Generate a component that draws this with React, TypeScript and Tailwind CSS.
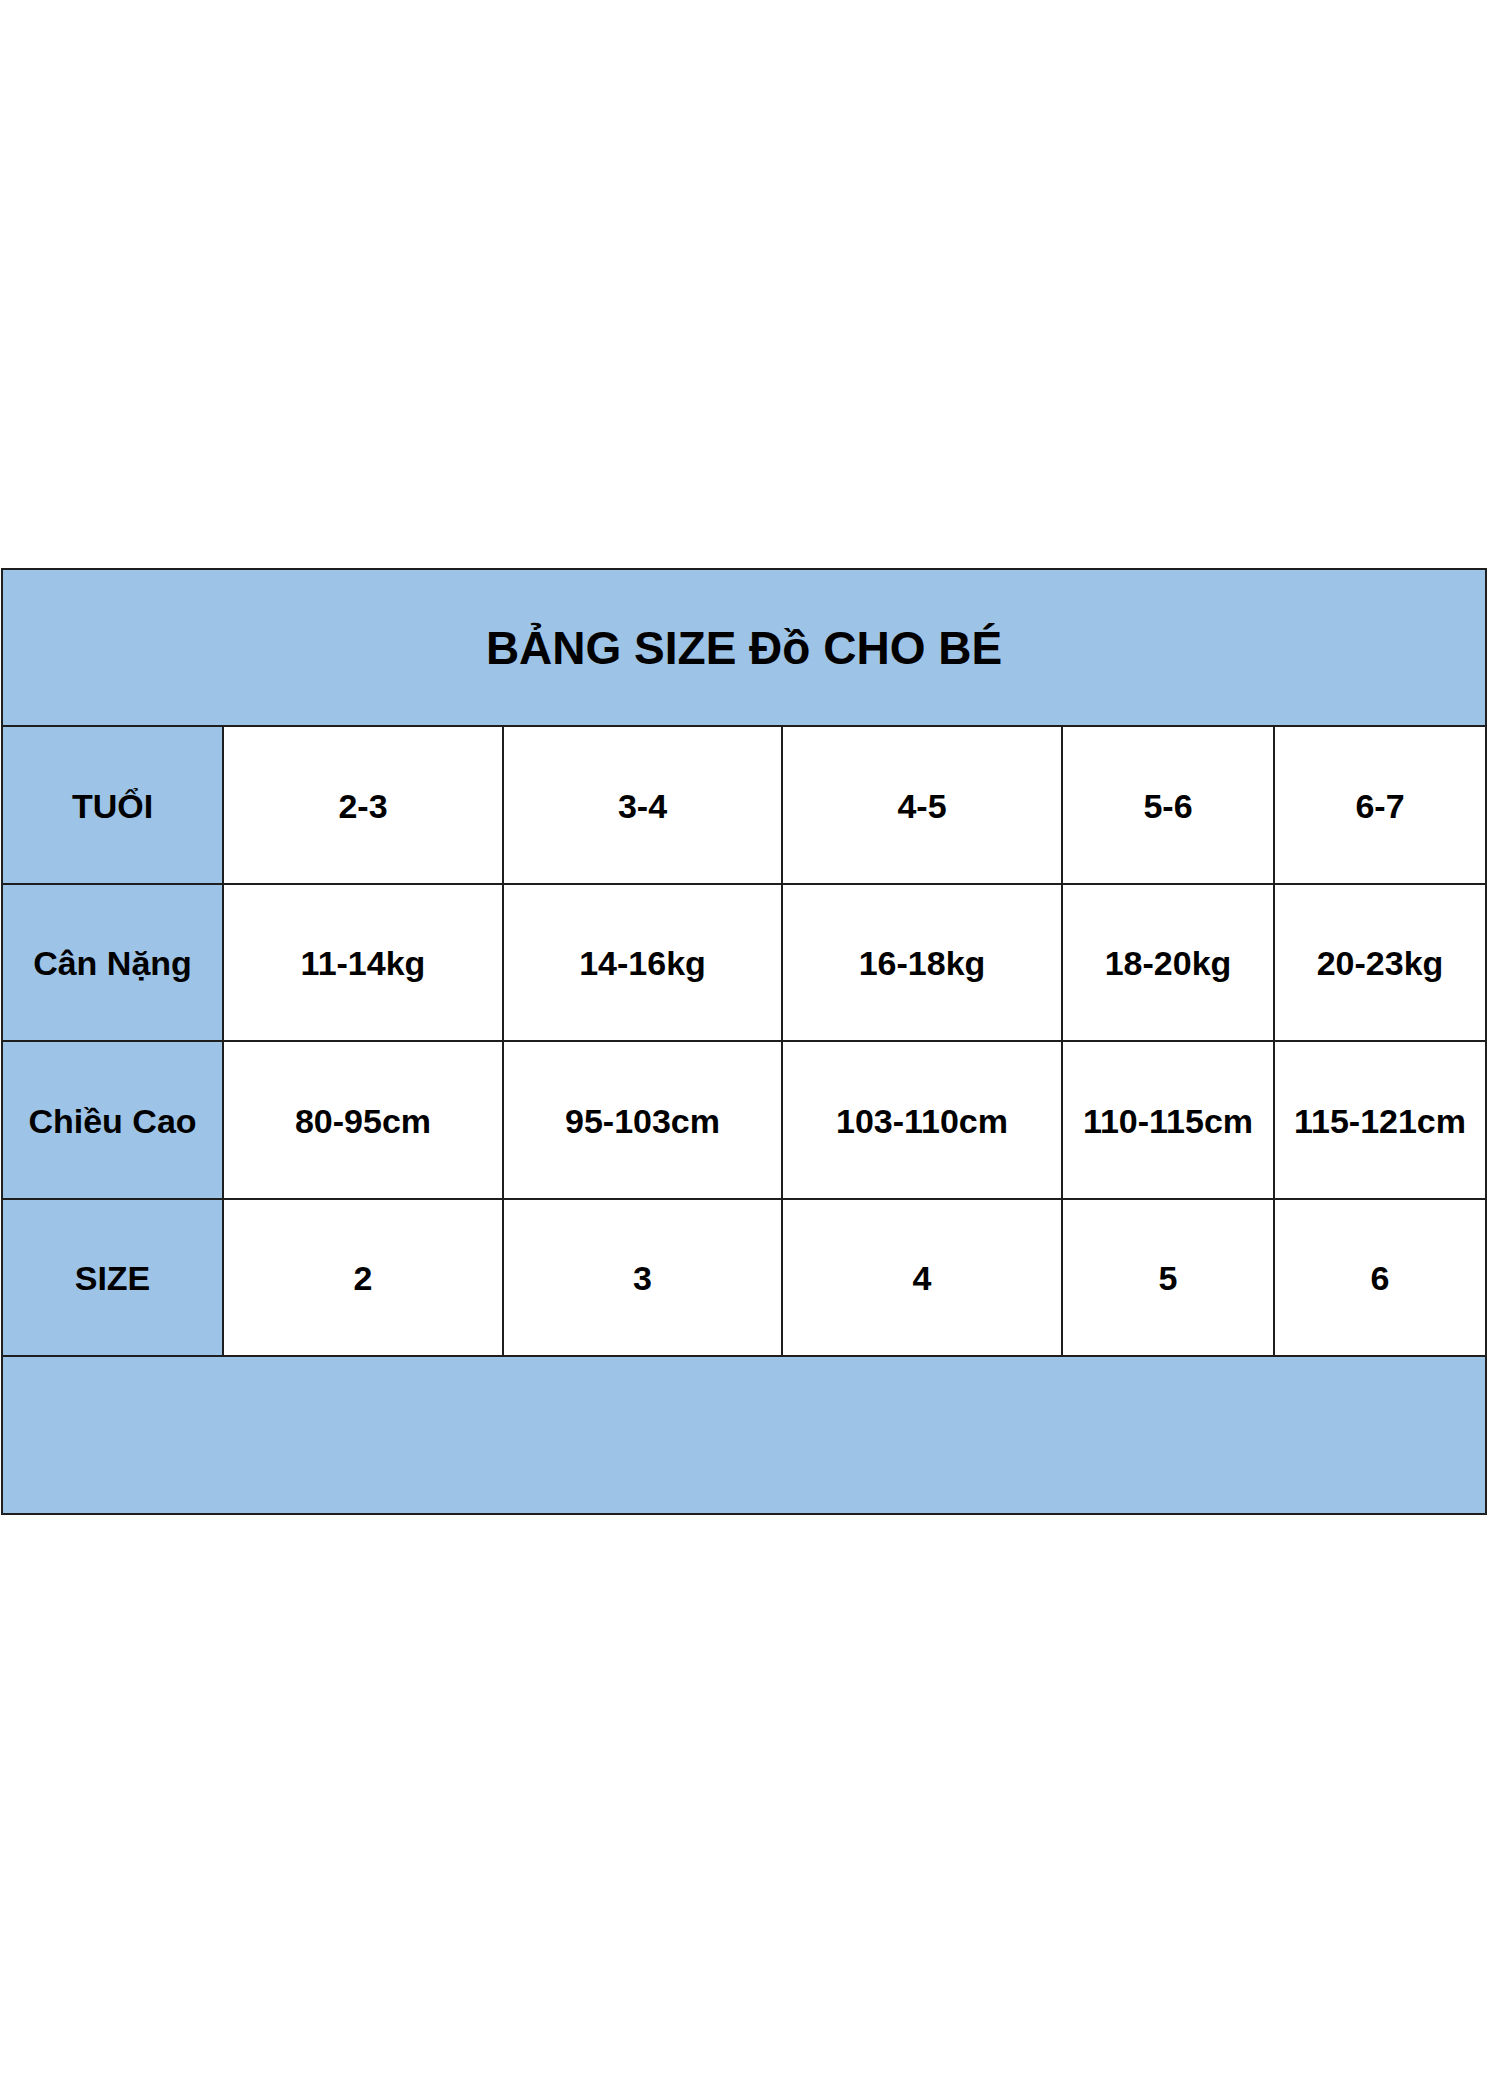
import React from "react";

const cols = ["w-[221px]", "w-[280px]", "w-[279px]", "w-[280px]", "w-[212px]", "w-[210px]"];

const rows: string[][] = [
  ["TUỔI", "2-3", "3-4", "4-5", "5-6", "6-7"],
  ["Cân Nặng", "11-14kg", "14-16kg", "16-18kg", "18-20kg", "20-23kg"],
  ["Chiều Cao", "80-95cm", "95-103cm", "103-110cm", "110-115cm", "115-121cm"],
  ["SIZE", "2", "3", "4", "5", "6"],
];

export default function App() {
  return (
    <div
      className="w-[1490px] h-[2086px] bg-white pt-[568px]"
      style={{ fontFamily: '"Liberation Sans", Arial, sans-serif' }}
    >
      <div className="ml-[1px] w-[1486px] border-2 border-[#1e1e1e] text-black font-bold">
        <div className="h-[157px] bg-[#9dc3e6] border-b-2 border-[#1e1e1e] flex items-center justify-center">
          <span className="text-[46px] leading-none">BẢNG SIZE Đồ CHO BÉ</span>
        </div>
        {rows.map((r, ri) => (
          <div key={ri} className="flex h-[157.5px] border-b-2 border-[#1e1e1e]">
            {r.map((c, ci) => (
              <div
                key={ci}
                className={`${cols[ci]} ${ci === 0 ? "bg-[#9dc3e6]" : "bg-white"} ${
                  ci < 5 ? "border-r-2 border-[#1e1e1e]" : ""
                } flex items-center justify-center text-[34px] leading-none whitespace-nowrap pt-[2px]`}
              >
                {c}
              </div>
            ))}
          </div>
        ))}
        <div className="h-[155.5px] bg-[#9dc3e6]" />
      </div>
    </div>
  );
}
